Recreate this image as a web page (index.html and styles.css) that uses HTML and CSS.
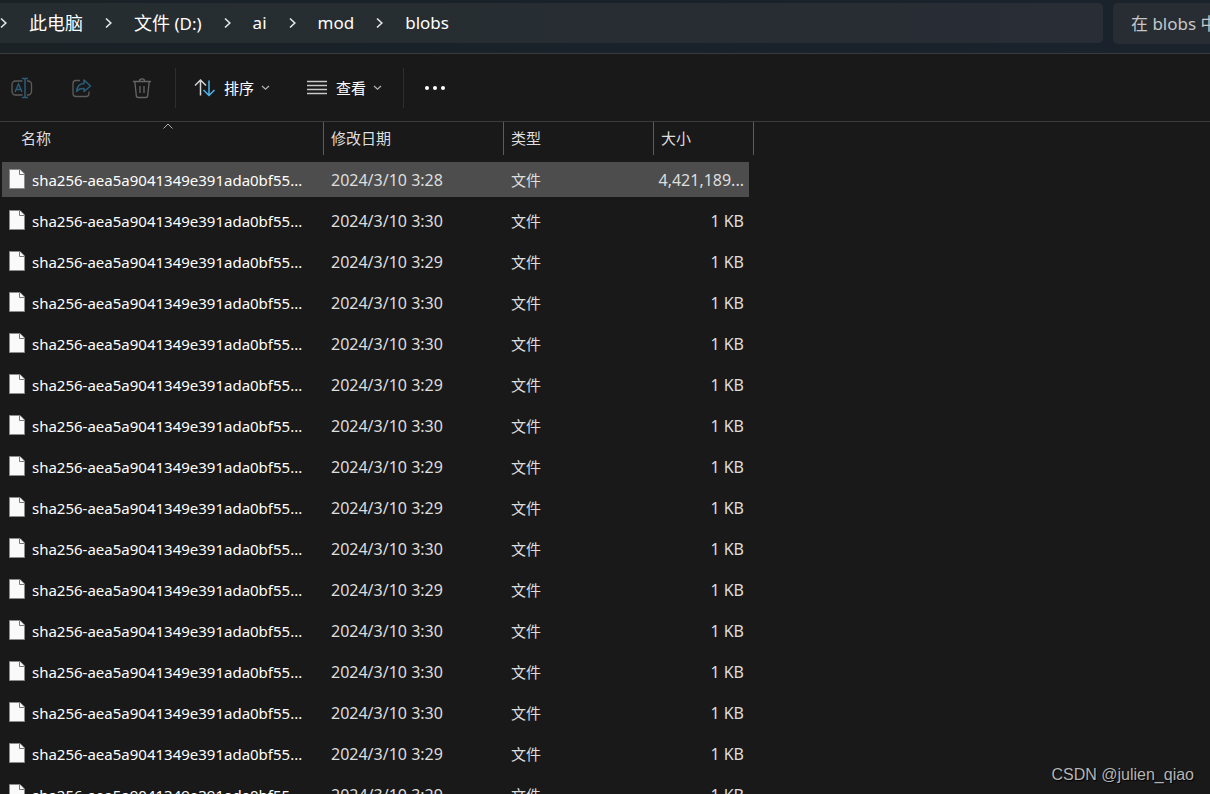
FILE: index.html
```
<!DOCTYPE html>
<html lang="zh-CN">
<head>
<meta charset="utf-8">
<title>blobs</title>
<link rel="stylesheet" href="styles.css">
</head>
<body>
<svg class="defs" aria-hidden="true">
  <symbol id="next" viewBox="0 0 7 12"><path d="M1 1.5 5.8 6 1 10.5" fill="none" stroke="#e4e6e7" stroke-width="1.6"/></symbol>
  <symbol id="down" viewBox="0 0 9 6"><path d="M1 1 4.5 4.3 8 1" fill="none" stroke="#b4b4b4" stroke-width="1.2"/></symbol>
  <symbol id="file" viewBox="0 0 16 20"><path d="M.5.5h10.5l4.5 4.5v14.500H.5z" fill="#fafafa" stroke="#8c8c8c"/><path d="M10.500.5V5.500h5" fill="#fafafa" stroke="#777"/></symbol>
</svg>
<header class="topbar">
  <nav class="address" aria-label="路径">
    <svg class="next"><use href="#next"/></svg>
    <a class="crumb" href="#"><span class="han">此电脑</span></a>
    <svg class="next"><use href="#next"/></svg>
    <a class="crumb" href="#"><span class="han">文件</span> (D:)</a>
    <svg class="next"><use href="#next"/></svg>
    <a class="crumb" href="#">ai</a>
    <svg class="next"><use href="#next"/></svg>
    <a class="crumb" href="#">mod</a>
    <svg class="next"><use href="#next"/></svg>
    <a class="crumb" href="#">blobs</a>
  </nav>
  <input class="search" type="text" aria-label="搜索" placeholder="在 blobs 中">
</header>
<div class="toolbar">
  <button class="tool" disabled aria-label="重命名">
    <svg width="22" height="22" viewBox="0 0 22 22" fill="none" stroke="#5c5c5c" stroke-width="1.300"><path d="M11.500 4H4.500A3.500 3.500 0 0 0 1 7.500v7A3.500 3.500 0 0 0 4.500 18h7M16 4h1a3.500 3.500 0 0 1 3.500 3.500v7A3.500 3.500 0 0 1 17 18h-1"/><path d="M4 15 7.500 7 11 15M5.200 12.500h4.600M11 1.500h6M14 1.500v19M11 20.500h6" stroke="#2b5c78" stroke-width="1.500"/></svg>
  </button>
  <button class="tool" disabled aria-label="共享">
    <svg width="22" height="22" viewBox="0 0 22 22" fill="none" stroke="#5c5c5c" stroke-width="1.300"><path d="M9 3.500H5a3 3 0 0 0-3 3v10a3 3 0 0 0 3 3h10a3 3 0 0 0 3-3v-2"/><path d="M13 3 19.500 9 13 14.500V11.500C9.500 11 7.500 12 5.500 14.500 6 9.500 8.500 6.700 13 6.500z" stroke="#2b5c78" stroke-width="1.500" stroke-linejoin="round"/></svg>
  </button>
  <button class="tool" disabled aria-label="删除">
    <svg width="22" height="22" viewBox="0 0 22 22" fill="none" stroke="#666" stroke-width="1.300"><path d="M2 4.500h18M8.300 4.500a2.700 2.700 0 0 1 5.400 0M3.800 4.500l1.500 14A2 2 0 0 0 7.300 20.500h7.400a2 2 0 0 0 2-2L18.200 4.500M9 9v7M13 9v7"/></svg>
  </button>
  <span class="rule"></span>
  <button class="menu">
    <svg width="22" height="22" viewBox="0 0 22 22" fill="none" stroke-width="1.500"><path d="M6.500 18.500V3M1 8.500 6.500 3 12 8.500" stroke="#d6d6d6"/><path d="M15 3.500v15M9.500 13 15 18.500l5.500-5.500" stroke="#4cb5ee"/></svg>
    <span>排序</span><svg class="down"><use href="#down"/></svg>
  </button>
  <button class="menu view">
    <svg width="22" height="22" viewBox="0 0 22 22" stroke="#c8c8c8" stroke-width="1.300"><path d="M1 4.500h20M1 8.500h20M1 12.500h20M1 16.500h20"/></svg>
    <span>查看</span><svg class="down"><use href="#down"/></svg>
  </button>
  <span class="rule"></span>
  <button class="more" aria-label="更多"><svg width="22" height="6" viewBox="0 0 22 6" fill="#fff"><circle cx="3" cy="3" r="2"/><circle cx="11" cy="3" r="2"/><circle cx="19" cy="3" r="2"/></svg></button>
</div>
<main class="list">
  <table class="files">
    <colgroup><col class="c-name"><col class="c-date"><col class="c-type"><col class="c-size"><col class="c-end"></colgroup>
    <thead><tr>
      <th class="name">名称<svg class="sorted" viewBox="0 0 10 6"><path d="M.5 5.500 5 1l4.500 4.500" fill="none" stroke="#b0b0b0"/></svg></th>
      <th>修改日期</th><th>类型</th><th colspan="2">大小</th>
    </tr></thead>
    <tbody id="rows"></tbody>
  </table>
</main>
<div class="mark">CSDN @julien_qiao</div>
<script src="files.js"></script>
</body>
</html>
```
FILE: styles.css
```
* { box-sizing: border-box; }
body {
  margin: 0;
  height: 100vh;
  overflow: hidden;
  display: flex;
  flex-direction: column;
  background: #191919;
  color: #fff;
  font-family: "Noto Sans", "Noto Sans CJK SC", sans-serif;
  font-size: 15px;
}
.defs { display: none; }
button {
  display: flex;
  align-items: center;
  border: 0;
  padding: 0;
  background: none;
  color: inherit;
  font: inherit;
}
.topbar {
  flex: none;
  display: flex;
  gap: 10px;
  height: 54px;
  padding: 3px 0 9px;
  background: linear-gradient(90deg, #1a2226, #19222b 60%, #1a232b);
  border-bottom: 1px solid #3b3b3b;
  overflow: hidden;
}
.address {
  flex: 1;
  display: flex;
  align-items: center;
  gap: 22px;
  height: 40px;
  border-radius: 0 5px 5px 0;
  background: linear-gradient(90deg, #262d30, #272d32 60%, #292d36);
}
.next { width: 7px; height: 12px; }
.crumb {
  color: #fff;
  font-size: 17px;
  line-height: 24px;
  text-decoration: none;
  white-space: nowrap;
}
.han { font-size: 18px; }
.search {
  flex: none;
  width: 107px;
  height: 41px;
  margin-right: -10px;
  padding: 0 0 0 18px;
  border: 0;
  border-radius: 5px;
  background: #282d33;
  color: #fff;
  font: inherit;
  font-size: 17px;
}
.search::placeholder { color: #c5c7c9; opacity: 1; }
.toolbar {
  flex: none;
  display: flex;
  align-items: center;
  height: 68px;
  border-bottom: 1px solid #3b3b3b;
}
.tool { width: 60px; padding-left: 11px; }
.tool:nth-child(3) { width: 55px; }
.rule { width: 1px; height: 40px; background: #2e2e2e; }
.menu { gap: 8px; padding-left: 18px; }
.menu .down { margin-left: -1px; }
.view { padding-left: 36px; padding-right: 21px; }
.down { width: 9px; height: 6px; }
.more { padding-left: 20px; }
.list { flex: 1; min-height: 0; overflow: hidden; padding-left: 2px; }
.files {
  width: 752px;
  table-layout: fixed;
  border-collapse: separate;
  border-spacing: 0;
  text-align: left;
}
.c-name { width: 322px; }
.c-date { width: 180px; }
.c-type { width: 150px; }
.c-size { width: 95px; }
.c-end { width: 5px; }
th {
  position: relative;
  height: 37px;
  padding: 0 0 7px 7px;
  background: linear-gradient(#5c5c5c, #5c5c5c) right top / 1px 33px no-repeat;
  color: #dedede;
  font-weight: 400;
}
th.name { padding-left: 19px; }
.sorted { position: absolute; top: 1px; left: 161px; width: 10px; height: 6px; }
td {
  height: 41px;
  padding: 0 0 0 7px;
  border-top: 3px solid transparent;
  border-bottom: 3px solid transparent;
  background-clip: padding-box;
  color: #dedede;
  white-space: nowrap;
}
td.date, td.size { font-size: 16px; line-height: 24px; }
td.size { padding: 0 5px 0 0; text-align: right; }
.active td { background-color: #4d4d4d; }
.active td:first-child { border-radius: 3px 0 0 3px; }
.active td.size { border-radius: 0 3px 3px 0; }
.active td.end { background: none; }
.item { display: flex; align-items: flex-start; gap: 7px; color: #fff; line-height: 22px; }
.item svg { width: 16px; height: 20px; flex: none; }
.mark {
  position: absolute;
  right: 16px;
  bottom: 9px;
  color: #b4b4b4;
  font: 16px/20px "Liberation Sans", sans-serif;
  text-shadow: 1px 1px 1px #000;
}
```
FILE: files.js
```
const minutes = ["28", "30", "29", "30", "30", "29", "30", "29", "29", "30", "29", "30", "30", "30", "29", "29"];
document.getElementById("rows").innerHTML = minutes.map((m, i) => `
  <tr class="${i === 0 ? "active" : ""}">
    <td><span class="item"><svg><use href="#file"/></svg>sha256-aea5a9041349e391ada0bf55...</span></td>
    <td class="date">2024/3/10 3:${m}</td>
    <td>文件</td>
    <td class="size">${i === 0 ? "4,421,189..." : "1 KB"}</td>
    <td class="end"></td>
  </tr>`).join("");
```
